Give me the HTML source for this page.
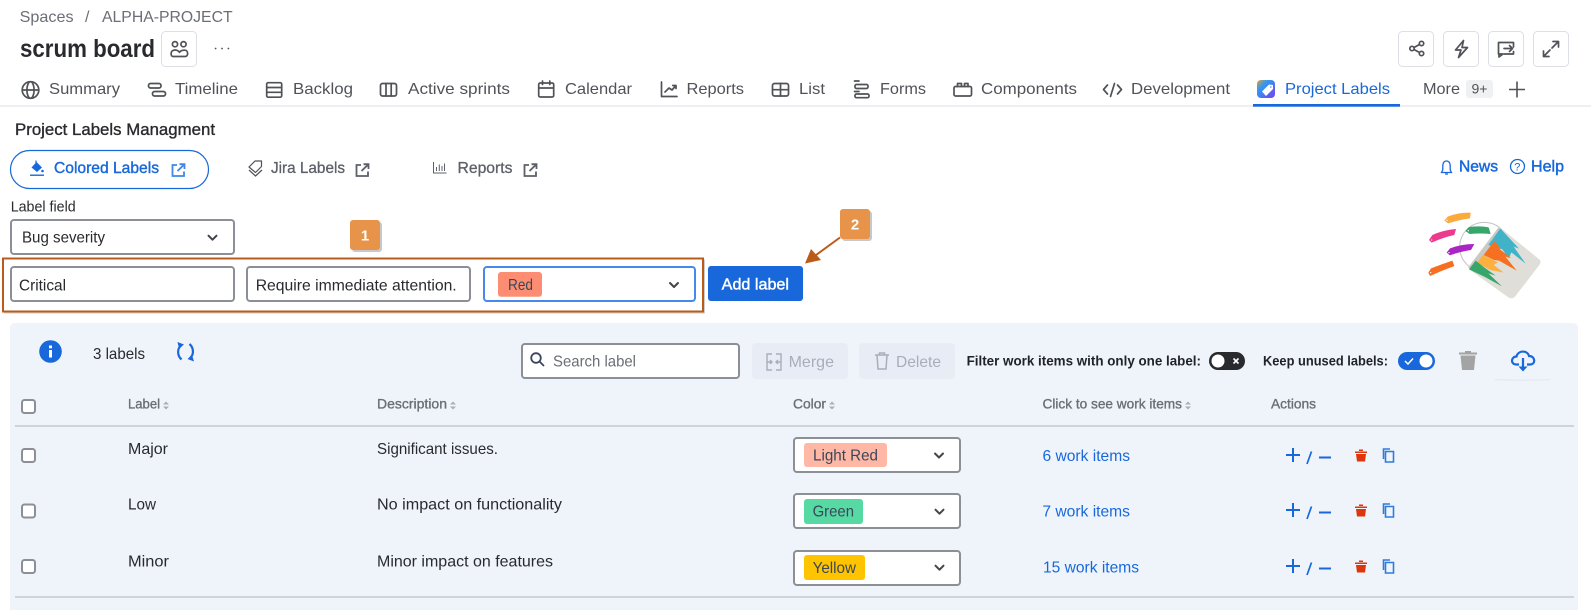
<!DOCTYPE html>
<html><head><meta charset="utf-8"><title>Project Labels</title>
<style>
html,body{margin:0;padding:0;background:#fff;width:1591px;height:610px;overflow:hidden}
svg{display:block;font-family:"Liberation Sans",sans-serif}
.tab{font-size:16px;fill:#505258}
.ic{fill:none;stroke:#505258;stroke-width:1.7;stroke-linecap:round;stroke-linejoin:round}
.h{font-size:14px;fill:#6b6e76;stroke:#6b6e76;stroke-width:.35}
.c{font-size:16px;fill:#292a2e}
.l{font-size:16px;fill:#1868db}
.b{font-size:14px;font-weight:700;fill:#1f2328}
.tg{font-size:16px;fill:#3b4658}
.box{fill:#fff;stroke:#8c8f97;stroke-width:2}
.chev{fill:none;stroke:#44454a;stroke-width:2;stroke-linecap:round;stroke-linejoin:round}
</style></head><body>
<svg xmlns="http://www.w3.org/2000/svg" width="1591" height="610" viewBox="0 0 1591 610">
<defs>
<linearGradient id="pl" x1="0" y1="0" x2="1" y2="1"><stop offset="0" stop-color="#f59a23"/><stop offset=".3" stop-color="#2f9cf0"/><stop offset="1" stop-color="#7a3cf0"/></linearGradient>
<path id="ex" d="M6,2H1.5V13H13V8.5M8.5,1.2H13.5V6M13.5,1.200L6.500,8"/>
<path id="ch" d="M-4,-2L0,2L4,-2"/>
<g id="sort"><path d="M0,3.5L3,0.5L6,3.5Z M0,5.5L3,8.5L6,5.5Z" fill="#a9adb6"/></g>
<g id="acts">
<path d="M1286,455H1300M1293,448V462" fill="none" stroke="#1868db" stroke-width="2"/>
<path d="M1311.500,451.500L1307,464" fill="none" stroke="#1868db" stroke-width="1.700"/>
<path d="M1319,457.500H1331" fill="none" stroke="#1868db" stroke-width="2"/>
<path d="M1355,451.500H1367V453H1355Z M1359,449.500H1363V451H1359Z M1356,454H1366L1365,461.500H1357Z" fill="#de350b"/>
<path d="M1385.500,451.500H1393.500V462H1385.500ZM1383.500,459V449H1390" fill="none" stroke="#2f7be0" stroke-width="1.600"/>
</g>
</defs>

<rect width="1591" height="610" fill="#fff"/>

<!-- breadcrumb & title -->
<text x="19.6" y="22" font-size="16" fill="#6b6e76" textLength="54" lengthAdjust="spacingAndGlyphs">Spaces</text>
<text x="85" y="22" font-size="16" fill="#6b6e76">/</text>
<text x="102" y="22" font-size="16" fill="#6b6e76" textLength="130.6" lengthAdjust="spacingAndGlyphs">ALPHA-PROJECT</text>
<text x="20" y="57" font-size="25" font-weight="700" fill="#292a2e" textLength="135" lengthAdjust="spacingAndGlyphs">scrum board</text>
<rect x="161.5" y="31.5" width="35" height="35" rx="4" fill="#fff" stroke="#dcdfe4"/>
<g class="ic">
<circle cx="175" cy="44.2" r="2.6"/><circle cx="183.5" cy="44.2" r="2.6"/>
<path d="M173,56.5H185C188.500,56.500 188.500,50.500 185,50.200C182.500,50 180.500,50.800 179.500,52.300C178,50 175,49.500 173,50.500C170.500,51.500 170.500,56.500 173,56.500Z"/>
</g>
<g fill="#505258"><circle cx="215.600" cy="48.500" r=".9"/><circle cx="222" cy="48.500" r=".9"/><circle cx="228.400" cy="48.500" r=".9"/></g>

<!-- right buttons -->
<g fill="#fff" stroke="#dcdfe4">
<rect x="1398.5" y="31.5" width="35" height="35" rx="4"/>
<rect x="1443.5" y="31.5" width="35" height="35" rx="4"/>
<rect x="1488.5" y="31.5" width="35" height="35" rx="4"/>
<rect x="1533.5" y="31.5" width="35" height="35" rx="4"/>
</g>
<g class="ic">
<circle cx="1412" cy="48.500" r="2.200"/><circle cx="1421.500" cy="43.500" r="2.200"/><circle cx="1421.500" cy="53.500" r="2.200"/><path d="M1414,47.500L1419.500,44.500M1414,49.500L1419.500,52.500"/>
<path d="M1463.500,40.500L1455.500,50H1461L1458.500,57.500L1467.500,47.500H1462Z"/>
<path d="M1513.500,47V42.500H1498.500V54H1503L1499,57V54M1513.500,51.500V54H1504"/><path d="M1504,48.500H1512.500M1509.500,45.500L1512.500,48.500L1509.500,51.500"/>
<path d="M1552,48L1558.500,41.500M1553,41.500H1558.500V47M1550,50L1543.500,56.500M1543.500,51V56.500H1549"/>
</g>

<!-- tabs -->
<g class="ic">
<circle cx="30.500" cy="90" r="8.300"/><ellipse cx="30.500" cy="90" rx="3.600" ry="8.300"/><path d="M22.200,90H38.800"/>
<rect x="148.500" y="83.500" width="12.500" height="4.500" rx="2"/><rect x="152.500" y="91.500" width="13" height="4.500" rx="2"/>
<rect x="266.700" y="82.700" width="15" height="14.500" rx="1.500"/><path d="M266.700,87.500H281.700M266.700,92.300H281.700"/>
<rect x="380.500" y="83.500" width="16" height="12.500" rx="2"/><path d="M386,83.500V96M391.200,83.500V96"/>
<rect x="538.700" y="83" width="15" height="14" rx="1.500"/><path d="M538.700,88H553.700M542.500,81V84.500M549.800,81V84.500"/>
<path d="M661.500,82V96.500H677M665,92L669,88L672,90L676,85.500M672.800,85.500H676V88.500"/>
<rect x="772.500" y="83.500" width="16" height="12.500" rx="2"/><path d="M772.500,89.700H788.500M780.500,83.500V96"/>
<path d="M854.500,81H859M854.500,91.500H859"/><rect x="855" y="84.500" width="13" height="4" rx="1.500"/><rect x="855" y="94" width="14" height="3.700" rx="1.500"/>
<rect x="954" y="86.500" width="17.500" height="9.500" rx="1.500"/><path d="M957.500,86.500V83.500H961.500V86.500M964.500,86.500V83.500H968V86.500"/>
<path d="M1107.500,85L1103.500,89.500L1107.500,94M1114.500,83.500L1110.500,96.500M1117.500,85L1121.500,89.500L1117.500,94"/>
</g>
<text class="tab" x="49" y="94" textLength="71" lengthAdjust="spacingAndGlyphs">Summary</text>
<text class="tab" x="175" y="94" textLength="63" lengthAdjust="spacingAndGlyphs">Timeline</text>
<text class="tab" x="293" y="94" textLength="60" lengthAdjust="spacingAndGlyphs">Backlog</text>
<text class="tab" x="408" y="94" textLength="102" lengthAdjust="spacingAndGlyphs">Active sprints</text>
<text class="tab" x="565" y="94" textLength="67" lengthAdjust="spacingAndGlyphs">Calendar</text>
<text class="tab" x="686.5" y="94" textLength="57.5" lengthAdjust="spacingAndGlyphs">Reports</text>
<text class="tab" x="799" y="94" textLength="26" lengthAdjust="spacingAndGlyphs">List</text>
<text class="tab" x="880" y="94" textLength="46" lengthAdjust="spacingAndGlyphs">Forms</text>
<text class="tab" x="981" y="94" textLength="96" lengthAdjust="spacingAndGlyphs">Components</text>
<text class="tab" x="1131" y="94" textLength="99" lengthAdjust="spacingAndGlyphs">Development</text>
<rect x="1257" y="80" width="18" height="18" rx="4" fill="url(#pl)"/>
<path d="M1262,91.500L1269,84.500L1273,85L1273,89L1266,96Z" fill="#fff"/><circle cx="1270.800" cy="87" r=".9" fill="#6ea6f5"/>
<text x="1285" y="94" font-size="16" fill="#1868db" textLength="105" lengthAdjust="spacingAndGlyphs">Project Labels</text>
<text class="tab" x="1423" y="94" textLength="37" lengthAdjust="spacingAndGlyphs">More</text>
<rect x="1466" y="80" width="27" height="18" rx="3" fill="#f0f1f2"/>
<text x="1471.5" y="93.500" font-size="14" fill="#505258" textLength="16" lengthAdjust="spacingAndGlyphs">9+</text>
<path d="M1509,89.500H1525M1517,81.500V97.500" fill="none" stroke="#505258" stroke-width="1.600"/>
<rect x="0" y="105.500" width="1591" height="1" fill="#dcdfe4"/>
<rect x="1253" y="104" width="147" height="2.700" fill="#1868db"/>

<!-- section title -->
<text x="15" y="135" font-size="16.500" fill="#292a2e" stroke="#292a2e" stroke-width=".35" textLength="200" lengthAdjust="spacingAndGlyphs">Project Labels Managment</text>

<!-- nav pills -->
<rect x="10.500" y="150.500" width="198" height="38" rx="19" fill="#fff" stroke="#1868db" stroke-width="1.200"/>
<path d="M36.500,162L42,167.500L37,172L31.500,167.500Z" fill="#1868db"/><path d="M36,160.500V164" stroke="#1868db" stroke-width="1.200"/><circle cx="42.500" cy="171" r="1.300" fill="#1868db"/><rect x="30" y="174.500" width="14" height="1.400" fill="#1868db"/>
<text x="54" y="173" font-size="16" fill="#1868db" stroke="#1868db" stroke-width=".4" textLength="105" lengthAdjust="spacingAndGlyphs">Colored Labels</text>
<use href="#ex" x="171" y="163" fill="none" stroke="#3f87e8" stroke-width="1.800"/>
<path d="M249,167L255,161H261.500V166.500L255.500,172.500ZM249,170L255.500,176L262,170" fill="none" stroke="#505258" stroke-width="1.200" stroke-linejoin="round"/>
<text x="271" y="173" font-size="16" fill="#5d6068" stroke="#5d6068" stroke-width=".3" textLength="74" lengthAdjust="spacingAndGlyphs">Jira Labels</text>
<use href="#ex" x="355" y="163" fill="none" stroke="#5d6068" stroke-width="1.800"/>
<path d="M433.500,162V173H446.500M436.500,171V167M439.300,171V164.500M442,171V166M444.500,171V163.500" fill="none" stroke="#5d6068" stroke-width="1"/>
<text x="457.500" y="173" font-size="16" fill="#5d6068" stroke="#5d6068" stroke-width=".3" textLength="55" lengthAdjust="spacingAndGlyphs">Reports</text>
<use href="#ex" x="523" y="163" fill="none" stroke="#5d6068" stroke-width="1.800"/>

<!-- news/help -->
<path d="M1446.500,161C1443.500,161 1442.800,164 1442.800,166V170L1441.500,172.500H1451.500L1450.200,170V166C1450.200,164 1449.500,161 1446.500,161ZM1445,174H1448" fill="none" stroke="#1868db" stroke-width="1.300"/>
<text x="1459" y="171.700" font-size="16" fill="#1868db" stroke="#1868db" stroke-width=".45" textLength="39" lengthAdjust="spacingAndGlyphs">News</text>
<circle cx="1517.500" cy="166.500" r="7" fill="none" stroke="#1868db" stroke-width="1.300"/>
<text x="1514.300" y="170.500" font-size="11" fill="#1868db">?</text>
<text x="1531" y="171.700" font-size="16" fill="#1868db" stroke="#1868db" stroke-width=".45" textLength="33" lengthAdjust="spacingAndGlyphs">Help</text>

<!-- paint image -->
<g transform="translate(1425,205) scale(.33333)">
<circle cx="178" cy="126" r="74" fill="none" stroke="#c2c2c2" stroke-width="3"/>
<path d="M222,65L345,165Q349,172 343,180L270,275Q262,284 250,277L135,195Z" fill="#dfded9"/>
<path d="M222,65L129,188L150,203L226,72Z" fill="#c9c9c5"/>
<path d="M226,70L190,120L232,133L252,160L259,142L302,176L266,125L282,131L246,92Z" fill="#41b3c9"/>
<path d="M208,108L176,150L207,165L222,167L275,197L241,155L258,159L226,134L218,118Z" fill="#f5701f"/>
<path d="M174,150L156,174L196,195L236,203L206,180L219,172Z" fill="#fbb03f"/>
<path d="M152,167L132,193L180,216L231,244L190,205L212,212L176,186Z" fill="#37a66b"/>
<path d="M58,47L68,35Q100,22 137,23L135,40Q100,45 70,55Z" fill="#fbab3c"/>
<path d="M12,105L22,90Q55,75 93,72L88,90Q55,97 20,113Z" fill="#ec3a8e"/>
<path d="M121,78L132,66Q165,62 191,67L197,87Q165,84 134,87Z" fill="#37a66b"/>
<path d="M65,143L75,130Q110,117 148,117L138,135Q105,140 75,151Z" fill="#a925c4"/>
<path d="M10,203L18,190Q50,178 82,167L88,183Q50,197 15,213Z" fill="#f76d22"/>
<g fill="#fff"><circle cx="66" cy="46" r="2"/><circle cx="20" cy="105" r="2"/><circle cx="130" cy="77" r="2"/><circle cx="72" cy="143" r="2"/><circle cx="17" cy="203" r="2"/></g>
</g>

<!-- form -->
<text x="10.700" y="211.700" font-size="15" fill="#292a2e" textLength="65" lengthAdjust="spacingAndGlyphs">Label field</text>
<rect class="box" x="11" y="220" width="223" height="34" rx="3"/>
<text class="c" x="22" y="242.700" textLength="83" lengthAdjust="spacingAndGlyphs">Bug severity</text>
<use href="#ch" x="212.500" y="237.700" class="chev"/>

<rect x="352" y="222" width="30" height="30" rx="3" fill="#c8c8c8"/>
<rect x="350" y="220" width="30" height="30" rx="3" fill="#e8934a"/>
<text x="365" y="240.500" font-size="15" font-weight="700" fill="#fff" text-anchor="middle">1</text>

<rect x="4" y="259.500" width="701" height="54" fill="#cfcfcf"/>
<rect x="3" y="258.500" width="700" height="53" fill="#fff" stroke="#bb5b1a" stroke-width="2"/>
<rect class="box" x="11" y="267" width="223" height="34" rx="3"/>
<text class="c" x="19" y="290.700" textLength="47" lengthAdjust="spacingAndGlyphs">Critical</text>
<rect class="box" x="247" y="267" width="223" height="34" rx="3"/>
<text class="c" x="255.700" y="290.700" textLength="201" lengthAdjust="spacingAndGlyphs">Require immediate attention.</text>
<rect x="484" y="267" width="211" height="34" rx="3" fill="#fff" stroke="#4688ec" stroke-width="2"/>
<rect x="498" y="272" width="44" height="24.700" rx="3" fill="#fd8d72"/>
<text class="tg" x="508" y="290" textLength="25" lengthAdjust="spacingAndGlyphs">Red</text>
<use href="#ch" x="674" y="285" class="chev"/>
<rect x="708" y="266" width="95" height="35" rx="3" fill="#1868db"/>
<text x="721.700" y="289.300" font-size="16" fill="#fff" stroke="#fff" stroke-width=".4" textLength="67.300" lengthAdjust="spacingAndGlyphs">Add label</text>

<rect x="842" y="211" width="30" height="30" rx="3" fill="#c8c8c8"/>
<rect x="840" y="209" width="30" height="30" rx="3" fill="#e8934a"/>
<text x="855" y="229.500" font-size="15" font-weight="700" fill="#fff" text-anchor="middle">2</text>
<path d="M840,237.500L816,255" stroke="#bb5b1a" stroke-width="2" fill="none"/>
<path d="M805,263.500L811,249L821,260Z" fill="#bb5b1a"/>

<!-- panel -->
<path d="M10,610V328Q10,323 15,323H1573Q1578,323 1578,328V610Z" fill="#eff4fb"/>
<circle cx="50.500" cy="351.500" r="11.300" fill="#1868db"/>
<rect x="49" y="350" width="3" height="7.500" fill="#fff"/><rect x="49" y="345.500" width="3" height="2.800" fill="#fff"/>
<text class="c" x="93" y="359" textLength="52" lengthAdjust="spacingAndGlyphs">3 labels</text>
<g fill="none" stroke="#1868db" stroke-width="2.200">
<path d="M181.500,345.500C177.500,347.500 176.500,355 181.500,359.500"/>
<path d="M189.500,344C194,348 194,355 190,358"/>
</g>
<path d="M177.500,342L184,344.500L179,348.500Z M194,361.500L187.500,359L192,355Z" fill="#1868db"/>

<!-- toolbar -->
<rect class="box" x="522" y="344" width="217" height="34" rx="3"/>
<circle cx="536" cy="358" r="4.800" fill="none" stroke="#3a4560" stroke-width="1.800"/><path d="M539.500,361.500L544,366" stroke="#3a4560" stroke-width="1.800"/>
<text x="553" y="366.700" font-size="16" fill="#6b6e76" textLength="83" lengthAdjust="spacingAndGlyphs">Search label</text>
<rect x="752" y="343" width="96" height="36" rx="4" fill="#e8edf5"/>
<path d="M772,354H767V370H772M776,354H781V370H776M767,362H771M770,360L772,362L770,364M781,362H777M778,360L776,362L778,364" fill="none" stroke="#a8adb9" stroke-width="1.400"/>
<text x="788.600" y="367" font-size="16" fill="#a8adb9" textLength="45.400" lengthAdjust="spacingAndGlyphs">Merge</text>
<rect x="859" y="343" width="96" height="36" rx="4" fill="#e8edf5"/>
<path d="M875,355H889M877,355L878,369H886L887,355M879.500,355V353H884.500V355" fill="none" stroke="#a8adb9" stroke-width="1.500"/>
<text x="896" y="367" font-size="16" fill="#a8adb9" textLength="45" lengthAdjust="spacingAndGlyphs">Delete</text>
<text class="b" x="966.600" y="365.700" textLength="234.400" lengthAdjust="spacingAndGlyphs">Filter work items with only one label:</text>
<rect x="1209" y="352" width="36" height="18" rx="9" fill="#292a2e"/>
<circle cx="1218" cy="361" r="6.500" fill="#fff"/>
<path d="M1233.500,358.500L1238.500,363.500M1238.500,358.500L1233.500,363.500" stroke="#fff" stroke-width="1.600"/>
<text class="b" x="1263" y="365.700" textLength="125" lengthAdjust="spacingAndGlyphs">Keep unused labels:</text>
<rect x="1398" y="352" width="37" height="18" rx="9" fill="#1868db"/>
<circle cx="1426" cy="361" r="6.500" fill="#fff"/>
<path d="M1405,361L1408,364L1413,358.500" fill="none" stroke="#fff" stroke-width="1.500"/>
<path d="M1459,352.500H1477V354.500H1459Z M1465,351H1471V352.500H1465Z M1460.500,355.500H1475.500L1474,370H1462Z" fill="#a3a3a3"/>
<path d="M1495,379.500Q1522,381 1550,379.500" fill="none" stroke="#e6ebf3" stroke-width="1.500"/>
<path d="M1519,364.500H1516.500C1510,364.500 1511,356.500 1516.500,356.500C1518,350 1527.500,350 1529,356C1535.500,356 1536,364.500 1530,364.500H1527" fill="none" stroke="#1868db" stroke-width="2.200"/>
<path d="M1523,358V368" fill="none" stroke="#1868db" stroke-width="2.200"/><path d="M1518.500,366.500H1527.500L1523,371.500Z" fill="#1868db"/>

<!-- table header -->
<rect x="22" y="400" width="13" height="13" rx="2.500" class="box"/>
<text class="h" x="128" y="408.300" textLength="32" lengthAdjust="spacingAndGlyphs">Label</text><use href="#sort" x="163" y="401"/>
<text class="h" x="377" y="408.300" textLength="70" lengthAdjust="spacingAndGlyphs">Description</text><use href="#sort" x="450" y="401"/>
<text class="h" x="793" y="408.300" textLength="33" lengthAdjust="spacingAndGlyphs">Color</text><use href="#sort" x="829" y="401"/>
<text class="h" x="1042.500" y="408.300" textLength="139.500" lengthAdjust="spacingAndGlyphs">Click to see work items</text><use href="#sort" x="1185" y="401"/>
<text class="h" x="1271" y="408.300" textLength="45" lengthAdjust="spacingAndGlyphs">Actions</text>
<rect x="15" y="425" width="1559" height="2" fill="#d0d4da"/>

<!-- row 1 -->
<rect x="22" y="449" width="13" height="13" rx="2.500" class="box"/>
<text class="c" x="128" y="454" textLength="40" lengthAdjust="spacingAndGlyphs">Major</text>
<text class="c" x="377" y="454" textLength="121" lengthAdjust="spacingAndGlyphs">Significant issues.</text>
<rect class="box" x="794" y="438" width="166" height="34" rx="3"/>
<rect x="804" y="443" width="83" height="24" rx="3" fill="#ffb8a6"/>
<text class="tg" x="813" y="460.700" textLength="65" lengthAdjust="spacingAndGlyphs">Light Red</text>
<use href="#ch" x="939" y="455.500" class="chev"/>
<text class="l" x="1042.500" y="461" textLength="87.500" lengthAdjust="spacingAndGlyphs">6 work items</text>
<use href="#acts"/>

<!-- row 2 -->
<rect x="22" y="504.500" width="13" height="13" rx="2.500" class="box"/>
<text class="c" x="128" y="509.500" textLength="28" lengthAdjust="spacingAndGlyphs">Low</text>
<text class="c" x="377" y="509.500" textLength="185" lengthAdjust="spacingAndGlyphs">No impact on functionality</text>
<rect class="box" x="794" y="494" width="166" height="34" rx="3"/>
<rect x="804" y="499" width="59" height="25" rx="3" fill="#57d9a3"/>
<text class="tg" x="812.600" y="516.700" textLength="41.400" lengthAdjust="spacingAndGlyphs">Green</text>
<use href="#ch" x="939.500" y="511.700" class="chev"/>
<text class="l" x="1042.400" y="516.700" textLength="87.600" lengthAdjust="spacingAndGlyphs">7 work items</text>
<use href="#acts" y="55"/>

<!-- row 3 -->
<rect x="22" y="560" width="13" height="13" rx="2.500" class="box"/>
<text class="c" x="128" y="566.500" textLength="41" lengthAdjust="spacingAndGlyphs">Minor</text>
<text class="c" x="377" y="566.500" textLength="176" lengthAdjust="spacingAndGlyphs">Minor impact on features</text>
<rect class="box" x="794" y="551" width="166" height="34" rx="3"/>
<rect x="804" y="555" width="61" height="25" rx="3" fill="#ffc400"/>
<text class="tg" x="812.600" y="573" textLength="43.400" lengthAdjust="spacingAndGlyphs">Yellow</text>
<use href="#ch" x="939.500" y="567.700" class="chev"/>
<text class="l" x="1043" y="572.700" textLength="96" lengthAdjust="spacingAndGlyphs">15 work items</text>
<use href="#acts" y="111"/>

<rect x="15" y="596" width="1559" height="2" fill="#d0d4da"/>
</svg>
</body></html>
